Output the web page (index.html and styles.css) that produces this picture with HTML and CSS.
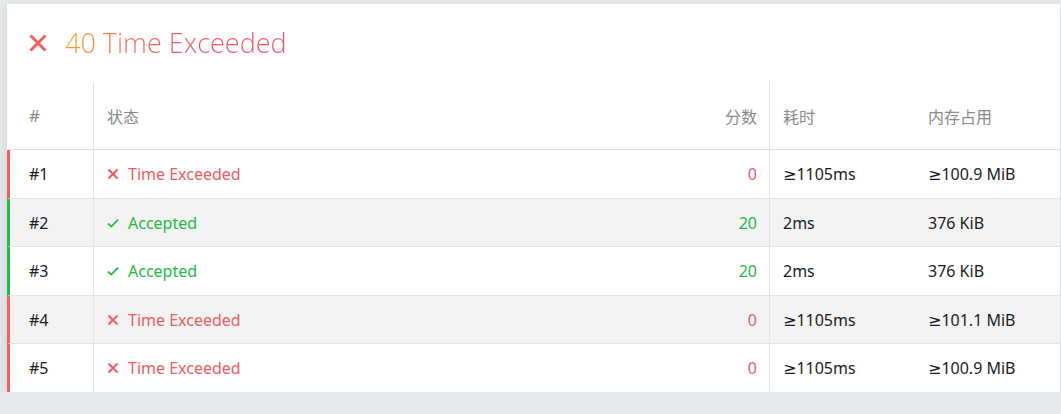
FILE: index.html
```html
<!DOCTYPE html>
<html>
<head>
<meta charset="utf-8">
<link rel="stylesheet" href="styles.css">
</head>
<body>
<div class="card">
  <div class="title">
    <svg class="title-x" width="18" height="18" viewBox="0 0 18 18"><path d="M1.5 1.5 L16.5 16.5 M16.5 1.5 L1.5 16.5" stroke="#f0605f" stroke-width="3"/></svg>
    <span class="title-text">40 Time Exceeded</span>
  </div>
  <div class="res">
    <div class="row head">
      <div class="cell c-id">#</div>
      <div class="cell c-status">状态</div>
      <div class="cell c-score">分数</div>
      <div class="cell c-time">耗时</div>
      <div class="cell c-mem">内存占用</div>
    </div>
    <div class="row bad">
      <div class="cell c-id">#1</div>
      <div class="cell c-status red"><svg class="ic" viewBox="0 0 12 12"><path d="M1.5 1.5 L10.5 10.5 M10.5 1.5 L1.5 10.5" stroke="currentColor" stroke-width="2"/></svg>Time Exceeded</div>
      <div class="cell c-score red">0</div>
      <div class="cell c-time">≥1105ms</div>
      <div class="cell c-mem">≥100.9 MiB</div>
    </div>
    <div class="row good alt">
      <div class="cell c-id">#2</div>
      <div class="cell c-status green"><svg class="ic" viewBox="0 0 12 12"><path d="M1 6.5 L4.3 9.6 L11 2.6" fill="none" stroke="currentColor" stroke-width="1.8"/></svg>Accepted</div>
      <div class="cell c-score green">20</div>
      <div class="cell c-time">2ms</div>
      <div class="cell c-mem">376 KiB</div>
    </div>
    <div class="row good">
      <div class="cell c-id">#3</div>
      <div class="cell c-status green"><svg class="ic" viewBox="0 0 12 12"><path d="M1 6.5 L4.3 9.6 L11 2.6" fill="none" stroke="currentColor" stroke-width="1.8"/></svg>Accepted</div>
      <div class="cell c-score green">20</div>
      <div class="cell c-time">2ms</div>
      <div class="cell c-mem">376 KiB</div>
    </div>
    <div class="row bad alt">
      <div class="cell c-id">#4</div>
      <div class="cell c-status red"><svg class="ic" viewBox="0 0 12 12"><path d="M1.5 1.5 L10.5 10.5 M10.5 1.5 L1.5 10.5" stroke="currentColor" stroke-width="2"/></svg>Time Exceeded</div>
      <div class="cell c-score red">0</div>
      <div class="cell c-time">≥1105ms</div>
      <div class="cell c-mem">≥101.1 MiB</div>
    </div>
    <div class="row bad last">
      <div class="cell c-id">#5</div>
      <div class="cell c-status red"><svg class="ic" viewBox="0 0 12 12"><path d="M1.5 1.5 L10.5 10.5 M10.5 1.5 L1.5 10.5" stroke="currentColor" stroke-width="2"/></svg>Time Exceeded</div>
      <div class="cell c-score red">0</div>
      <div class="cell c-time">≥1105ms</div>
      <div class="cell c-mem">≥100.9 MiB</div>
    </div>
  </div>
</div>
</body>
</html>
```

FILE: styles.css
```css
html, body {
  margin: 0;
  padding: 0;
  background: #e5e9ec;
  font-family: "Noto Sans", "DejaVu Sans", "Noto Sans CJK SC", sans-serif;
}
body {
  padding: 4px 1px 0 7px;
}
.card {
  background: #fff;
  box-shadow: 0 4px 12px rgba(0, 0, 0, 0.09);
}
.title {
  height: 78px;
  display: flex;
  align-items: center;
  padding-left: 22px;
  box-sizing: border-box;
}
.title-x {
  display: block;
  margin-right: 18px;
  margin-top: -1px;
}
.title-text {
  font-family: "Open Sans", sans-serif;
  font-weight: 300;
  font-size: 27px;
  background: linear-gradient(90deg, #f9a02c 0%, #f7813f 18%, #f2606a 40%, #f0586a 100%);
  -webkit-background-clip: text;
  background-clip: text;
  color: transparent;
  margin-top: -1px;
}
.res {
  font-size: 16px;
  color: #1b1c1d;
}
.row {
  display: grid;
  grid-template-columns: 84px 1fr 80px 145px 145px;
  height: 48.5px;
  border-left: 3px solid transparent;
  border-bottom: 1px solid #e4e4e4;
  box-sizing: border-box;
}
.row.head {
  height: 68px;
  color: #8a8a8a;
  border-bottom-color: #dedede;
}
.row.last {
  border-bottom: none;
  height: 47.5px;
}
.row.bad { border-left-color: #f0605f; }
.row.good { border-left-color: #21ba45; }
.row.alt { background: #f3f3f3; }
.cell {
  display: flex;
  align-items: center;
  padding: 1px 13px 0;
  white-space: nowrap;
}
.head .cell { padding-top: 0; }
.c-id {
  border-right: 1px solid #e4e4e4;
  padding-left: 19px;
}
.head .c-id { padding-left: 19px; font-size: 17px; }
.c-status { padding-left: 13px; }
.c-score {
  justify-content: flex-end;
  padding-right: 12px;
  border-right: 1px solid #e4e4e4;
}
.red { color: #f05b60; }
.green { color: #21ba45; }
.ic {
  width: 12px;
  height: 12px;
  margin-right: 9px;
  flex: none;
}
```
